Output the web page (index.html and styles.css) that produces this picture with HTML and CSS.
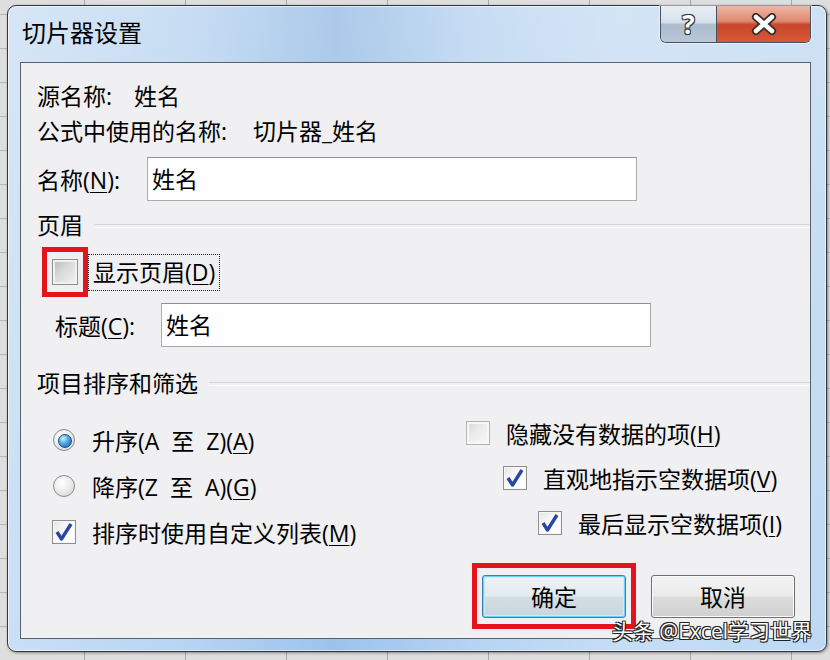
FILE: index.html
```html
<!DOCTYPE html>
<html lang="zh-CN">
<head>
    <meta charset="UTF-8">
    <title>切片器设置</title>
    <link rel="stylesheet" href="styles.css">
</head>
<body>
    <div class="window">
        <div class="titlebar">
            <span class="title">切片器设置</span>
            <div class="caption-buttons">
                <span class="cap-btn help">?</span>
                <span class="cap-btn close">
                    <svg width="28" height="22" viewBox="0 0 28 22">
                        <path d="M6 4 L22 18 M22 4 L6 18" stroke="#3a2a2a" stroke-width="8" stroke-linecap="round"/>
                        <path d="M6 4 L22 18 M22 4 L6 18" stroke="#ffffff" stroke-width="4.5" stroke-linecap="round"/>
                    </svg>
                </span>
            </div>
        </div>

        <div class="panel">
            <div class="info-row"><span>源名称:</span><span class="value">姓名</span></div>
            <div class="info-row"><span>公式中使用的名称:</span><span class="value wide">切片器_姓名</span></div>

            <div class="field-row">
                <label>名称(<u>N</u>):</label>
                <div class="textbox">姓名</div>
            </div>

            <div class="group-head"><span>页眉</span></div>
            <div class="check-row">
                <span class="mark-box small"><span class="check gray"></span></span>
                <span class="focus-label">显示页眉(<u>D</u>)</span>
            </div>
            <div class="field-row caption-row">
                <label>标题(<u>C</u>):</label>
                <div class="textbox">姓名</div>
            </div>

            <div class="group-head"><span>项目排序和筛选</span></div>
            <div class="options">
                <div class="opt-col left">
                    <div class="opt">
                        <span class="radio-wrap"><span class="radio on"></span></span>
                        <span class="spaced">升序(A 至 Z)(<u>A</u>)</span>
                    </div>
                    <div class="opt">
                        <span class="radio-wrap"><span class="radio"></span></span>
                        <span class="spaced">降序(Z 至 A)(<u>G</u>)</span>
                    </div>
                    <div class="opt">
                        <span class="check">
                            <svg width="22" height="22" viewBox="0 0 22 22"><path d="M4 11 L8.5 18 L18 3" stroke="#2747a3" stroke-width="3.4" fill="none" stroke-linejoin="round"/></svg>
                        </span>
                        <span>排序时使用自定义列表(<u>M</u>)</span>
                    </div>
                </div>
                <div class="opt-col right">
                    <div class="opt">
                        <span class="check faded"></span>
                        <span>隐藏没有数据的项(<u>H</u>)</span>
                    </div>
                    <div class="opt indent1">
                        <span class="check">
                            <svg width="22" height="22" viewBox="0 0 22 22"><path d="M4 11 L8.5 18 L18 3" stroke="#2747a3" stroke-width="3.4" fill="none" stroke-linejoin="round"/></svg>
                        </span>
                        <span>直观地指示空数据项(<u>V</u>)</span>
                    </div>
                    <div class="opt indent2">
                        <span class="check">
                            <svg width="22" height="22" viewBox="0 0 22 22"><path d="M4 11 L8.5 18 L18 3" stroke="#2747a3" stroke-width="3.4" fill="none" stroke-linejoin="round"/></svg>
                        </span>
                        <span>最后显示空数据项(<u>I</u>)</span>
                    </div>
                </div>
            </div>

            <div class="buttons">
                <span class="mark-box wide"><button class="btn default">确定</button></span>
                <button class="btn">取消</button>
            </div>
        </div>

        <div class="watermark">头条 @Excel学习世界</div>
    </div>
</body>
</html>
```

FILE: styles.css
```css
* {
    margin: 0;
    padding: 0;
    box-sizing: border-box;
}
body {
    width: 830px;
    height: 660px;
    overflow: hidden;
    padding: 5px 0 0 7px;
    font-family: "Open Sans", "Noto Sans CJK SC", "Microsoft YaHei", sans-serif;
    font-size: 23px;
    color: #000;
    background-color: #dedede;
    background-image:
        repeating-linear-gradient(90deg, transparent 0, transparent 84px, #a8a8a8 84px, #a8a8a8 85px, transparent 85px, transparent 101px),
        repeating-linear-gradient(0deg, transparent 0, transparent 33px, #b8b8b8 33px, #b8b8b8 34px);
}
u {
    text-decoration-thickness: 1px;
    text-underline-offset: 3px;
}

/* window frame */
.window {
    position: relative;
    width: 820px;
    height: 647px;
    border: 1px solid #30363c;
    border-radius: 9px;
    padding: 0 15px 12px 12px;
    display: flex;
    flex-direction: column;
    background:
        linear-gradient(90deg, rgba(255, 255, 255, 0.3) 0%, rgba(255, 255, 255, 0.05) 22%, rgba(70, 130, 200, 0.2) 40%, rgba(255, 255, 255, 0.05) 58%, rgba(255, 255, 255, 0.25) 75%, rgba(255, 255, 255, 0.15) 100%),
        linear-gradient(#c6dcf3, #bcd6f0 50%, #b3d2f3);
    box-shadow: inset 0 0 0 1px rgba(255, 255, 255, 0.6), 1px 1px 3px rgba(0, 0, 0, 0.4);
}
.titlebar {
    height: 56px;
    display: flex;
    justify-content: space-between;
    align-items: flex-start;
}
.title {
    margin: 11px 0 0 2px;
    line-height: 32px;
    font-size: 24px;
}
.caption-buttons {
    display: flex;
    height: 37px;
    border: 1px solid #47525e;
    border-top: none;
    border-radius: 0 0 6px 6px;
    overflow: hidden;
    box-shadow: 0 0 0 1px rgba(255, 255, 255, 0.5);
}
.cap-btn {
    display: flex;
    align-items: center;
    justify-content: center;
    height: 100%;
}
.help {
    width: 55px;
    font-size: 26px;
    font-weight: bold;
    color: #fff;
    text-shadow: 1px 1px 0 #333, -1px -1px 0 #333, 1px -1px 0 #333, -1px 1px 0 #333;
    background: linear-gradient(#e8eef5 0%, #d6e1ed 45%, #adbccd 52%, #b9c8d8 100%);
}
.close {
    width: 94px;
    border-left: 1px solid #47525e;
    background: linear-gradient(#edb6a6 0%, #de8a71 42%, #c8452a 52%, #d65a37 100%);
}

/* dialog body */
.panel {
    flex: 1;
    border: 1px solid #56616c;
    background: #f0eff1;
    padding: 16px 0 9px 16px;
    display: flex;
    flex-direction: column;
}
.info-row {
    line-height: 35px;
}
.info-row .value {
    margin-left: 22px;
}
.info-row .value.wide {
    margin-left: 26px;
}
.field-row {
    display: flex;
    align-items: center;
    margin-top: 8px;
}
.field-row label {
    width: 110px;
}
.caption-row {
    margin-top: 6px;
    padding-left: 18px;
}
.caption-row label {
    width: 106px;
}
.textbox {
    width: 490px;
    height: 44px;
    line-height: 42px;
    padding-left: 4px;
    background: #fefdff;
    border: 1px solid #a9abb0;
    border-top-color: #8f9196;
}
.group-head {
    display: flex;
    align-items: center;
    line-height: 35px;
    margin-top: 7px;
}
.group-head::after {
    content: "";
    flex: 1;
    height: 2px;
    margin-left: 11px;
    border-top: 1px solid #d7d6d9;
    border-bottom: 1px solid #fbfbfb;
}
.caption-row + .group-head {
    margin-top: 19px;
}
.check-row {
    display: flex;
    align-items: center;
    height: 50px;
    margin: 4px 0 0 5px;
}
.mark-box {
    display: flex;
    align-items: center;
    justify-content: center;
    border: 5px solid #e3141b;
}
.mark-box.small {
    width: 46px;
    height: 50px;
}
.mark-box.wide {
    width: 164px;
    height: 66px;
}
.focus-label {
    line-height: 35px;
    padding: 0 4px;
    border: 1px dotted #222;
}

/* checkboxes and radios */
.check {
    width: 24px;
    height: 24px;
    flex: none;
    border: 1px solid #8e8f8f;
    background: linear-gradient(135deg, #e6e6e6, #ffffff 60%);
    box-shadow: inset 0 0 0 1px #f6f6f6;
    display: flex;
    align-items: center;
    justify-content: center;
}
.check.gray {
    width: 26px;
    height: 26px;
    background: linear-gradient(135deg, #b9b9b9 0%, #dadada 45%, #f2f2f2 100%);
    box-shadow: inset 0 0 0 2px #f1f1f1;
}
.check.faded {
    border-color: #b4b4b4;
    background: linear-gradient(135deg, #d9d9d9 0%, #ececec 45%, #fafafa 100%);
    box-shadow: inset 0 0 0 2px #f7f7f7;
}
.radio-wrap {
    width: 24px;
    flex: none;
    display: flex;
    justify-content: center;
}
.radio {
    position: relative;
    width: 22px;
    height: 22px;
    border-radius: 50%;
    border: 1px solid #8b8c8d;
    background: radial-gradient(circle at 40% 35%, #ffffff 0%, #e9e9e9 55%, #c9c9c9 100%);
}
.radio.on::after {
    content: "";
    position: absolute;
    left: 4px;
    top: 4px;
    width: 12px;
    height: 12px;
    border-radius: 50%;
    border: 1px solid #1d4f86;
    background: radial-gradient(circle at 35% 30%, #d4f0ff 0%, #55aee8 40%, #155799 100%);
}
.options {
    display: grid;
    grid-template-columns: 429px 1fr;
}
.opt-col {
    display: flex;
    flex-direction: column;
}
.opt-col.left {
    padding: 23px 0 0 15px;
    gap: 14px;
}
.opt-col.right {
    padding-top: 16px;
    gap: 13px;
}
.opt {
    display: flex;
    align-items: center;
    gap: 16px;
    height: 32px;
    white-space: nowrap;
}
.spaced {
    word-spacing: 6px;
}
.indent1 {
    margin-left: 37px;
}
.indent2 {
    margin-left: 72px;
}

/* buttons */
.buttons {
    margin-top: auto;
    display: flex;
    justify-content: flex-end;
    align-items: center;
    gap: 15px;
    padding-right: 15px;
}
.btn {
    width: 144px;
    height: 43px;
    font: inherit;
    color: #000;
    border: 1px solid #707070;
    border-radius: 3px;
    background: linear-gradient(#f3f3f3 0%, #ebebeb 48%, #dcdcdc 52%, #d0d0d0 100%);
    box-shadow: inset 0 0 0 1px #fbfbfb;
}
.btn.default {
    border-color: #3c7fb1;
    background: linear-gradient(#eef3f6 0%, #e3ebf0 48%, #d3dee4 52%, #c9d6dd 100%);
    box-shadow: inset 0 0 0 1px #6fd0f7, inset 0 0 0 2px #c8ecfa;
}

.watermark {
    position: absolute;
    right: 14px;
    bottom: 8px;
    font-size: 21px;
    line-height: 24px;
    color: #fff;
    text-shadow: 1px 1px 0 #222, -1px -1px 0 #222, 1px -1px 0 #222, -1px 1px 0 #222;
}
```
